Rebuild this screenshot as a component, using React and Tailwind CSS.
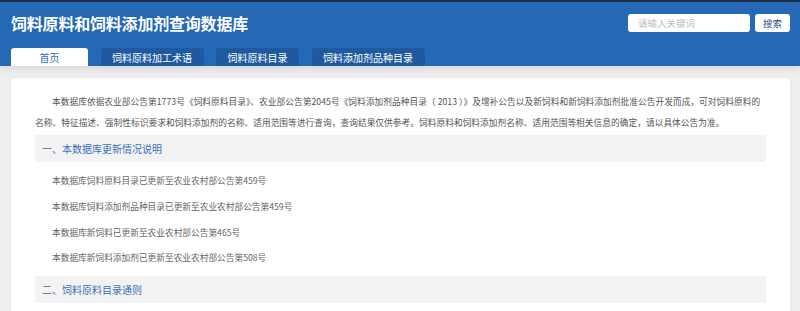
import React from 'react'

const tabs = ['首页', '饲料原料加工术语', '饲料原料目录', '饲料添加剂品种目录']

const updates = [
  '本数据库饲料原料目录已更新至农业农村部公告第459号',
  '本数据库饲料添加剂品种目录已更新至农业农村部公告第459号',
  '本数据库新饲料已更新至农业农村部公告第465号',
  '本数据库新饲料添加剂已更新至农业农村部公告第508号',
]

const SectionTitle = ({ children }) => (
  <div className='h-[27px] bg-[#f3f3f3] px-[7px] flex items-center text-[10px] text-[#3b70b6]'>
    {children}
  </div>
)

export default function App() {
  return (
    <div className='w-[800px] h-[311px] overflow-hidden bg-[#efefef]' style={{ fontFamily: '"Noto Sans CJK SC", "Noto Sans", sans-serif' }}>
      {/* header */}
      <div className='relative h-[66px] bg-[#2468b6] border-t-2 border-[#1b2d47] shadow-[0_2px_8px_rgba(0,0,0,0.12)]'>
        <div className='flex items-center justify-between pl-[11px] pr-[10px] pt-[11px]'>
          <h1 className='text-[16px] leading-[20px] font-bold text-white tracking-[-0.2px]'>饲料原料和饲料添加剂查询数据库</h1>
          <div className='flex items-center gap-[5px]'>
            <div className='w-[122px] h-[18px] bg-white rounded-[3px] flex items-center pl-[10px] text-[9.5px] text-[#c0c0c0]'>请输入关键词</div>
            <div className='w-[35px] h-[18px] bg-white rounded-[3px] flex items-center justify-center text-[9.5px] text-[#2d4f86]'>搜索</div>
          </div>
        </div>
        <div className='flex gap-[12.5px] pl-[11px] mt-[15px]'>
          {tabs.map((t, i) => (
            <div
              key={t}
              className={i === 0
                ? 'w-[77px] h-[18px] bg-white rounded-t-[3px] flex items-center justify-center text-[10px] text-[#3b70b6]'
                : 'h-[18px] px-[11.5px] bg-[#1f5aa0] rounded-t-[3px] flex items-center justify-center text-[10px] text-white'}
            >
              {t}
            </div>
          ))}
        </div>
      </div>

      {/* content card */}
      <div className='mx-[11px] mt-[12px] w-[779px] bg-white rounded-[3px] shadow-[0_0_3px_rgba(0,0,0,0.06)] px-[24px] pt-[13px] pb-[20px]'>
        <p className='text-[8.7px] leading-[21px] tracking-[0.04px] text-[#555] indent-[17px]'>
          本数据库依据农业部公告第1773号《饲料原料目录》、农业部公告第2045号《饲料添加剂品种目录（ 2013 ）》及增补公告以及新饲料和新饲料添加剂批准公告开发而成，可对饲料原料的名称、特征描述、强制性标识要求和饲料添加剂的名称、适用范围等进行查询，查询结果仅供参考。饲料原料和饲料添加剂名称、适用范围等相关信息的确定，请以具体公告为准。
        </p>
        <div className='mt-[2px]'>
          <SectionTitle>一、本数据库更新情况说明</SectionTitle>
        </div>
        <div className='flex flex-col pl-[17px] pt-[6px] pb-[5px]'>
          {updates.map(u => (
            <div key={u} className='h-[25.7px] flex items-center text-[8.7px] text-[#666]'>{u}</div>
          ))}
        </div>
        <SectionTitle>二、饲料原料目录通则</SectionTitle>
      </div>
    </div>
  )
}
